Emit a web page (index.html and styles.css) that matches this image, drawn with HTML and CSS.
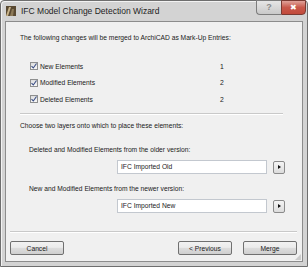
FILE: index.html
```html
<!DOCTYPE html>
<html lang="en">
<head>
  <meta charset="UTF-8" />
  <title>IFC Model Change Detection Wizard</title>
  <link rel="stylesheet" href="styles.css">
</head>
<body>
  <div class="ventana">
    <div class="barra-titulo">
      <svg class="icono" width="10" height="10" viewBox="0 0 10 10">
        <rect width="10" height="10" fill="#5a4a32"/>
        <path d="M0 10 L3 1 L5 1 L2 10 Z" fill="#c9b48a"/>
        <path d="M4 10 L6 3 L8 3 L7 10 Z" fill="#8d7a58"/>
      </svg>
      <span class="titulo">IFC Model Change Detection Wizard</span>
      <div class="botones-ventana">
        <div class="btn-ayuda">?</div>
        <div class="btn-cerrar">✖</div>
      </div>
    </div>

    <div class="cliente">
      <div class="contenido">
        <p class="intro">The following changes will be merged to ArchiCAD as Mark-Up Entries:</p>

        <div class="lista">
          <div class="fila-check">
            <span class="check"><svg width="6" height="6" viewBox="0 0 6 6"><path d="M0.5 3.2 L2.3 5 L5.5 0.5" fill="none" stroke="#3b4f86" stroke-width="1.1"/></svg></span>
            <span class="etiqueta">New Elements</span>
            <span class="numero">1</span>
          </div>
          <div class="fila-check">
            <span class="check"><svg width="6" height="6" viewBox="0 0 6 6"><path d="M0.5 3.2 L2.3 5 L5.5 0.5" fill="none" stroke="#3b4f86" stroke-width="1.1"/></svg></span>
            <span class="etiqueta">Modified Elements</span>
            <span class="numero">2</span>
          </div>
          <div class="fila-check">
            <span class="check"><svg width="6" height="6" viewBox="0 0 6 6"><path d="M0.5 3.2 L2.3 5 L5.5 0.5" fill="none" stroke="#3b4f86" stroke-width="1.1"/></svg></span>
            <span class="etiqueta">Deleted Elements</span>
            <span class="numero">2</span>
          </div>
        </div>

        <div class="separador"></div>

        <p class="elegir">Choose two layers onto which to place these elements:</p>

        <div class="grupo-capa">
          <div class="texto-capa">Deleted and Modified Elements from the older version:</div>
          <div class="fila-capa">
            <div class="campo">IFC Imported Old</div>
            <div class="btn-flecha"><span class="triangulo"></span></div>
          </div>
        </div>

        <div class="grupo-capa segundo">
          <div class="texto-capa">New and Modified Elements from the newer version:</div>
          <div class="fila-capa">
            <div class="campo">IFC Imported New</div>
            <div class="btn-flecha"><span class="triangulo"></span></div>
          </div>
        </div>
      </div>

      <div class="pie">
        <div class="separador-pie"></div>
        <div class="botones">
          <button class="boton">Cancel</button>
          <div class="derecha">
            <button class="boton">&lt; Previous</button>
            <button class="boton">Merge</button>
          </div>
        </div>
      </div>
      <div class="agarre"></div>
    </div>
  </div>
</body>
</html>
```

FILE: styles.css
```css
body {
  margin: 0;
  padding: 0;
  background: #ffffff;
  font-family: "Liberation Sans", Arial, sans-serif;
}

.ventana {
  width: 308px;
  height: 267px;
  box-sizing: border-box;
  background: #d3d3d3;
  border: 1px solid #6e6e6e;
  border-radius: 4px 4px 0 0;
  display: flex;
  flex-direction: column;
  padding: 0 4px 4px 4px;
  box-shadow: inset 1px 1px 0 #f2f2f2;
}

.barra-titulo {
  height: 20px;
  display: flex;
  align-items: center;
  position: relative;
}

.icono {
  margin-left: 1px;
  margin-right: 5px;
}

.titulo {
  font-size: 8.5px;
  color: #1e1e1e;
}

.botones-ventana {
  position: absolute;
  top: -1px;
  right: -3px;
  display: flex;
}

.btn-ayuda {
  width: 25px;
  height: 15px;
  box-sizing: border-box;
  border: 1px solid #7c7c7c;
  border-right: none;
  border-radius: 0 0 0 4px;
  background: linear-gradient(#e6e6e6, #c9c9c9);
  color: #8a8a8a;
  font-size: 9px;
  font-weight: bold;
  text-align: center;
  line-height: 13px;
}

.btn-cerrar {
  width: 25px;
  height: 15px;
  box-sizing: border-box;
  border: 1px solid #7a3a32;
  border-radius: 0 0 4px 0;
  background: linear-gradient(#e0a39a, #c8584a 50%, #c24a3b);
  color: #ffffff;
  font-size: 8px;
  text-align: center;
  line-height: 13px;
}

.cliente {
  flex: 1;
  background: #f0f0f0;
  border: 1px solid #8c8c8c;
  display: flex;
  flex-direction: column;
  position: relative;
  font-size: 6.7px;
  color: #1a1a1a;
}

.contenido {
  flex: 1;
  padding: 0 14px;
}

.intro {
  margin: 12px 0 0 0;
  height: 8px;
  line-height: 8px;
}

.lista {
  margin-top: 20px;
  padding-left: 10px;
  display: flex;
  flex-direction: column;
  gap: 8.5px;
}

.fila-check {
  display: flex;
  align-items: center;
  height: 8px;
}

.check {
  width: 8px;
  height: 8px;
  box-sizing: border-box;
  border: 1px solid #8e8f8f;
  background: linear-gradient(#dedede, #f8f8f8);
  display: flex;
  align-items: center;
  justify-content: center;
  margin-right: 2px;
}

.etiqueta {
  width: 180px;
}

.numero {
  font-size: 6.8px;
}

.separador {
  margin-top: 10px;
  height: 1px;
  background: #c9c9c9;
  border-bottom: 1px solid #ffffff;
  margin-right: 5px;
}

.elegir {
  margin: 7px 0 0 0;
  height: 8px;
  line-height: 8px;
}

.grupo-capa {
  padding-left: 9px;
}

.texto-capa {
  margin-top: 16px;
  height: 8px;
  line-height: 8px;
}

.segundo .texto-capa {
  margin-top: 11px;
}

.fila-capa {
  display: flex;
  align-items: center;
  margin-top: 6px;
  padding-left: 88px;
}

.campo {
  width: 150px;
  height: 14px;
  box-sizing: border-box;
  border: 1px solid #c3c8cf;
  background: #ffffff;
  line-height: 12px;
  padding-left: 3px;
}

.btn-flecha {
  width: 12px;
  height: 13px;
  box-sizing: border-box;
  margin-left: 6px;
  border: 1px solid #8a8a8a;
  border-radius: 2px;
  background: linear-gradient(#f4f4f4, #dcdcdc);
  display: flex;
  align-items: center;
  justify-content: center;
}

.triangulo {
  width: 0;
  height: 0;
  border-top: 2px solid transparent;
  border-bottom: 2px solid transparent;
  border-left: 3px solid #111111;
}

.pie {
  padding: 0 5px 6px 4px;
}

.separador-pie {
  height: 1px;
  background: #c9c9c9;
  border-bottom: 1px solid #ffffff;
}

.botones {
  display: flex;
  justify-content: space-between;
  margin-top: 8px;
}

.derecha {
  display: flex;
  gap: 11px;
}

.boton {
  width: 54px;
  height: 14px;
  padding: 0;
  border: 1px solid #707070;
  border-radius: 2px;
  background: linear-gradient(#f2f2f2 0%, #ebebeb 45%, #dddddd 50%, #cfcfcf 100%);
  font-family: "Liberation Sans", Arial, sans-serif;
  font-size: 6.7px;
  color: #1a1a1a;
}

.agarre {
  position: absolute;
  right: 1px;
  bottom: 1px;
  width: 6px;
  height: 6px;
  background: radial-gradient(circle, #a0a0a0 0.6px, transparent 0.8px) 0 0 / 2px 2px;
  clip-path: polygon(100% 0, 100% 100%, 0 100%);
}
```
